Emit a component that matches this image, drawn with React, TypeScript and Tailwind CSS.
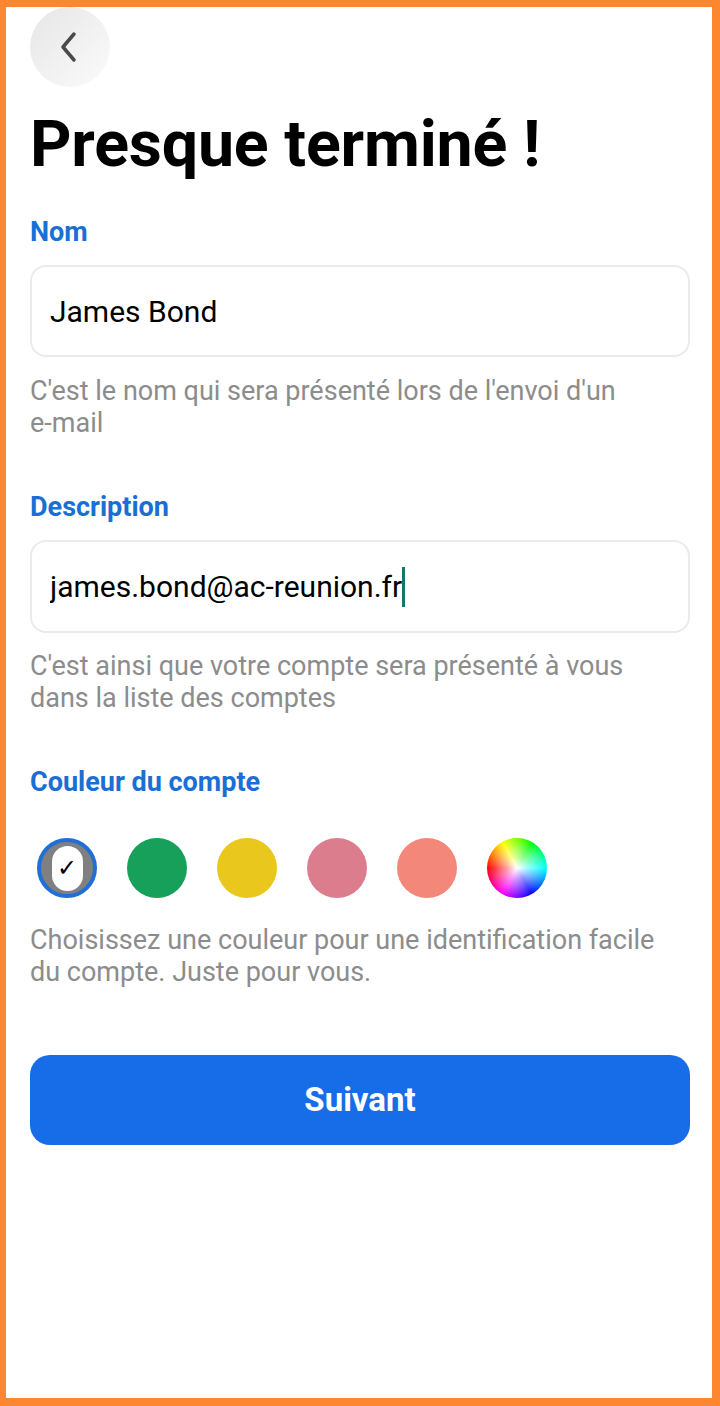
import { useState } from "react";

const colors = ["#16a05a", "#e9c71d", "#dc7d8d", "#f2877a"];

function ColorWheel() {
  return (
    <div className="relative w-[60px] h-[60px] rounded-full overflow-hidden bg-[conic-gradient(from_-90deg,#ff0000,#ffff00_60deg,#00ff00_120deg,#00ffff_180deg,#0000ff_240deg,#ff00ff_300deg,#ff0000_360deg)]">
      <div className="absolute inset-0 rounded-full bg-[radial-gradient(circle,#ffffff_0%,rgba(255,255,255,0.6)_25%,rgba(255,255,255,0)_70%)]" />
    </div>
  );
}

export default function App() {
  const [name, setName] = useState("James Bond");
  const [desc, setDesc] = useState("james.bond@ac-reunion.fr");
  const [selected, setSelected] = useState(0);

  return (
    <div className="w-[720px] h-[1406px] bg-[#fd8631] pt-[6px] pl-[6px] pr-[8px] pb-[9px] font-['Roboto',sans-serif]">
      <div className="h-full bg-white pl-[24px] pr-[22px]">
        <button className="mt-[1px] w-[80px] h-[80px] rounded-full bg-[linear-gradient(135deg,#e6e6e6,#fbfbfb)] flex items-center justify-center">
          <svg width="30" height="34" viewBox="0 0 30 34" fill="none">
            <path d="M19 4 L8 17 L19 30" stroke="#4a4a4a" strokeWidth="3.5" strokeLinecap="round" strokeLinejoin="round" />
          </svg>
        </button>

        <h1 className="mt-[17px] text-[64.5px] leading-[80px] font-bold text-black tracking-[-0.2px]">Presque terminé !</h1>

        <label className="block mt-[32px] text-[27px] leading-[32px] font-bold text-[#1a6fd4]">Nom</label>
        <div className="mt-[17px] h-[92px] rounded-[16px] border-2 border-[#ebebeb] flex items-center px-[18px]">
          <input
            value={name}
            onChange={(e) => setName(e.target.value)}
            className="w-full text-[30px] text-black outline-none bg-transparent"
          />
        </div>
        <p className="mt-[18px] pr-[40px] text-[27px] leading-[32px] text-[#8c8c8c]">
          C'est le nom qui sera présenté lors de l'envoi d'un <span className="whitespace-nowrap">e-mail</span>
        </p>

        <label className="block mt-[52px] text-[27px] leading-[32px] font-bold text-[#1a6fd4]">Description</label>
        <div className="mt-[17px] h-[93px] rounded-[16px] border-2 border-[#ebebeb] flex items-center px-[18px]">
          <input
            value={desc}
            onChange={(e) => setDesc(e.target.value)}
            className="field-sizing-content text-[30px] text-black outline-none bg-transparent"
          />
          <span className="w-[3px] h-[40px] bg-[#107a6e]" />
        </div>
        <p className="mt-[17px] pr-[40px] text-[27px] leading-[32px] text-[#8c8c8c]">
          C'est ainsi que votre compte sera présenté à vous dans la liste des comptes
        </p>

        <label className="block mt-[52px] text-[27px] leading-[32px] font-bold text-[#1a6fd4]">Couleur du compte</label>
        <div className="mt-[40px] flex items-center gap-[30px] pl-[7px]">
          <button
            onClick={() => setSelected(0)}
            className="w-[60px] h-[60px] rounded-full border-[4px] border-[#1f6fd6] bg-[#808080] flex items-center justify-center"
          >
            <span className="w-[31px] h-[45px] rounded-full bg-white flex items-center justify-center text-[24px] leading-none text-black">
              ✓
            </span>
          </button>
          {colors.map((c, i) => (
            <button
              key={c}
              onClick={() => setSelected(i + 1)}
              className="w-[60px] h-[60px] rounded-full"
              style={{ backgroundColor: c, outline: selected === i + 1 ? "3px solid #1f6fd6" : "none" }}
            />
          ))}
          <ColorWheel />
        </div>
        <p className="mt-[26px] pr-[20px] text-[27px] leading-[32px] text-[#8c8c8c]">
          Choisissez une couleur pour une identification facile du compte. Juste pour vous.
        </p>

        <button className="mt-[67px] w-full h-[90px] rounded-[20px] bg-[#176de8] text-white text-[33px] font-bold">
          Suivant
        </button>
      </div>
    </div>
  );
}
